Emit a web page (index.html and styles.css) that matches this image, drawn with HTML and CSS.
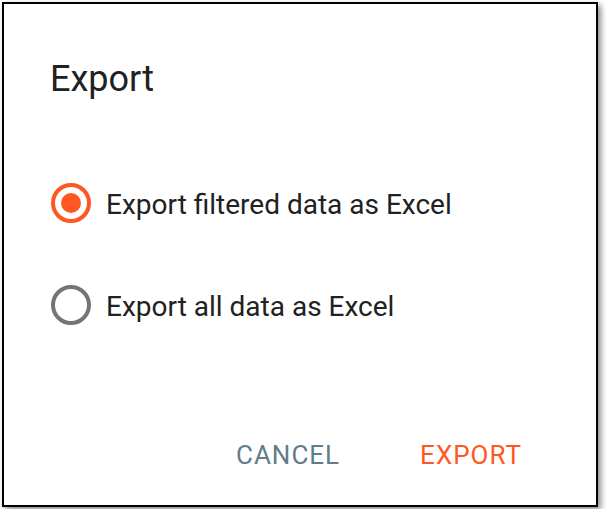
FILE: index.html
```html
<!DOCTYPE html>
<html lang="en">
  <head>
    <meta charset="UTF-8" />
    <meta name="viewport" content="width=device-width, initial-scale=1.0" />
    <link rel="stylesheet" href="styles.css">
    <title>Export</title>
  </head>
  <body>
    <div class="dialog">
      <h1 class="dialog-title">Export</h1>

      <div class="options">
        <label class="option">
          <span class="radio checked"><span class="dot"></span></span>
          <span class="option-label">Export filtered data as Excel</span>
        </label>
        <label class="option">
          <span class="radio"></span>
          <span class="option-label">Export all data as Excel</span>
        </label>
      </div>

      <div class="actions">
        <button class="btn btn-cancel">Cancel</button>
        <button class="btn btn-export">Export</button>
      </div>
    </div>
  </body>
</html>
```

FILE: styles.css
```css
/* 基本設定 */
* {
  margin: 0;
  padding: 0;
  box-sizing: border-box;
}

body {
  font-family: Roboto, "Liberation Sans", Arial, sans-serif;
  background-color: #fff;
  color: rgba(0, 0, 0, 0.87);
  padding: 2px;
}

/* ダイアログ */
.dialog {
  width: 596px;
  height: 505px;
  background-color: #fff;
  border: 2px solid #000;
  box-shadow: 3px 3px 6px rgba(0, 0, 0, 0.45);
  display: flex;
  flex-direction: column;
}

.dialog-title {
  font-size: 36px;
  font-weight: 400;
  line-height: 40px;
  color: #212121;
  padding: 55px 0 0 46px;
}

/* ラジオボタン */
.options {
  margin-top: 74px;
  padding-left: 47px;
  display: flex;
  flex-direction: column;
  gap: 42px;
}

.option {
  display: flex;
  align-items: center;
  height: 60px;
  gap: 15px;
}

.radio {
  width: 40px;
  height: 40px;
  border: 4px solid #757575;
  border-radius: 50%;
  display: flex;
  align-items: center;
  justify-content: center;
  flex-shrink: 0;
}

.radio.checked {
  border-color: #ff5722;
}

.dot {
  width: 20px;
  height: 20px;
  border-radius: 50%;
  background-color: #ff5722;
}

.option-label {
  font-size: 28px;
  color: #212121;
  padding-top: 2px;
}

/* ボタン */
.actions {
  margin-top: auto;
  display: flex;
  justify-content: flex-end;
  gap: 52px;
  padding: 0 60px 26px 0;
}

.btn {
  height: 48px;
  padding: 0 14px;
  font-family: inherit;
  font-size: 26px;
  font-weight: 400;
  letter-spacing: 1px;
  text-transform: uppercase;
  background: none;
  border: none;
  cursor: pointer;
}

.btn-cancel {
  color: #607d8b;
}

.btn-export {
  color: #ff5722;
}
```
